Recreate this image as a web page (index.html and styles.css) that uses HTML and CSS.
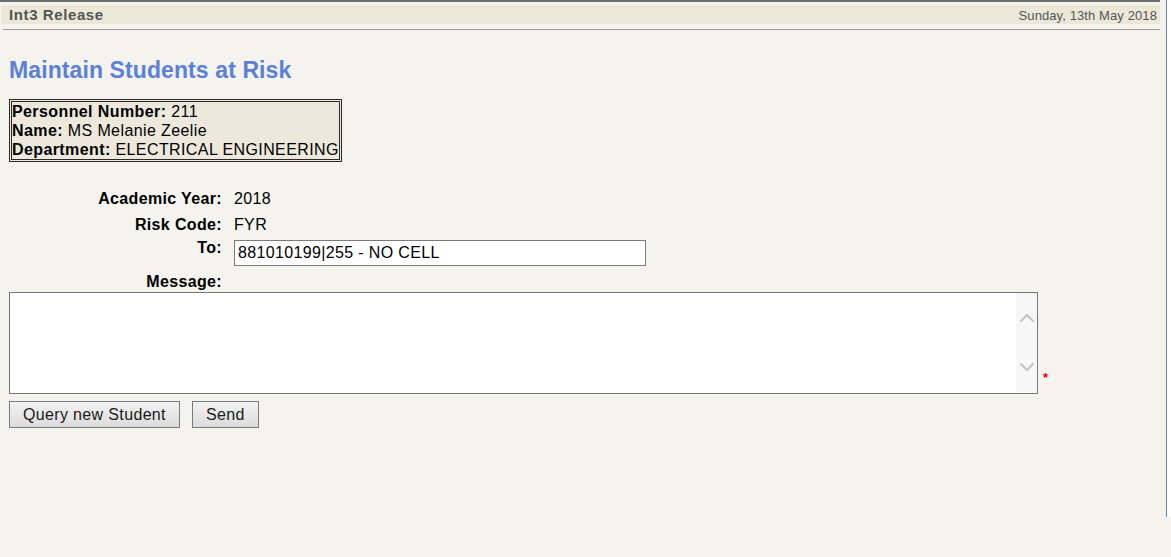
FILE: index.html
```html
<!DOCTYPE html>
<html>
<head>
<meta charset="utf-8">
<link rel="stylesheet" href="styles.css">
</head>
<body>
<div class="shell">
  <div class="frame">
    <div class="topline"></div>
    <div class="headbar">
      <span class="release">Int3 Release</span>
      <span class="date">Sunday, 13th May 2018</span>
    </div>
    <div class="headrule"></div>
    <h1 class="title">Maintain Students at Risk</h1>
    <div class="infobox">
      <div><b>Personnel Number:</b> 211</div>
      <div><b>Name:</b> MS Melanie Zeelie</div>
      <div><b>Department:</b> ELECTRICAL ENGINEERING</div>
    </div>
    <div class="fields">
      <div class="lbl">Academic Year:</div><div class="val">2018</div>
      <div class="lbl">Risk Code:</div><div class="val">FYR</div>
      <div class="lbl lbl-to">To:</div><div class="val val-to"><input class="to-input" type="text" value="881010199|255 - NO CELL"></div>
      <div class="lbl lbl-msg">Message:</div><div class="val"></div>
    </div>
    <div class="msgrow">
      <div class="msgbox">
        <textarea class="msg"></textarea>
        <div class="scroll">
          <svg class="chev" width="16" height="10" viewBox="0 0 16 10"><path d="M1.5 8.5 L8 2 L14.5 8.5" fill="none" stroke="#c4c4c4" stroke-width="2.2"/></svg>
          <svg class="chev" width="16" height="10" viewBox="0 0 16 10"><path d="M1.5 1.5 L8 8 L14.5 1.5" fill="none" stroke="#c4c4c4" stroke-width="2.2"/></svg>
        </div>
      </div>
      <span class="req">*</span>
    </div>
    <div class="buttons">
      <button class="btn" type="button">Query new Student</button>
      <button class="btn" type="button">Send</button>
    </div>
  </div>
  <div class="gutter"></div>
</div>
</body>
</html>
```
FILE: styles.css
```css
html, body {
  margin: 0;
  padding: 0;
  background: #f4f3ee;
  font-family: "Liberation Sans", Arial, sans-serif;
  color: #000;
}
.shell {
  display: flex;
  align-items: flex-start;
}
.frame {
  width: 1166px;
  height: 517px;
  border-right: 1px solid #5d87b0;
  overflow: hidden;
}
.gutter {
  flex: 1;
  height: 517px;
  background: #ffffff;
}
.topline {
  height: 2px;
  width: 1160px;
  background: #6e6e6e;
}
.headbar {
  margin: 3px 6px 0 1px;
  height: 19px;
  line-height: 19px;
  background: #ebe8da;
  display: flex;
  justify-content: space-between;
  align-items: baseline;
  padding: 0 3px 0 8px;
  color: #555;
}
.release {
  font-weight: bold;
  font-size: 15px;
  letter-spacing: 0.6px;
}
.date {
  font-size: 13px;
  letter-spacing: 0.1px;
}
.headrule {
  margin: 5px 6px 0 3px;
  height: 1px;
  background: #9a9a9a;
}
.title {
  margin: 27px 0 0 9px;
  font-size: 23px;
  line-height: 26px;
  font-weight: bold;
  color: #5a80d8;
  letter-spacing: 0.1px;
}
.infobox {
  display: inline-block;
  margin: 16px 0 0 9px;
  border: 3px double #2a2a2a;
  background: #ece9dc;
  font-size: 16px;
  line-height: 19px;
  letter-spacing: 0.4px;
}
.fields {
  margin: 23px 0 0 9px;
  display: grid;
  grid-template-columns: 213px 1fr;
  column-gap: 12px;
  font-size: 16px;
  line-height: 18px;
  letter-spacing: 0.35px;
}
.lbl {
  text-align: right;
  font-weight: bold;
  padding: 5px 0 3px;
}
.val {
  padding: 5px 0 3px;
}
.lbl-to {
  padding: 2px 0 0;
}
.val-to {
  padding: 3px 0;
}
.lbl-msg {
  padding: 4px 0 0;
}
.to-input {
  box-sizing: border-box;
  width: 412px;
  height: 26px;
  margin: 0;
  border: 1px solid #7a7a7a;
  background: #fff;
  font-family: "Liberation Sans", Arial, sans-serif;
  font-size: 16px;
  letter-spacing: 0.35px;
  padding: 0 3px;
  color: #000;
  display: block;
}
.msgrow {
  margin: 1px 0 0 9px;
  display: flex;
  align-items: flex-end;
}
.msgbox {
  box-sizing: border-box;
  width: 1029px;
  height: 102px;
  border: 1px solid #777;
  background: #fff;
  display: flex;
}
.msg {
  flex: 1;
  border: none;
  margin: 0;
  padding: 2px;
  resize: none;
  outline: none;
  background: #fff;
  font-family: "Liberation Sans", Arial, sans-serif;
  font-size: 16px;
}
.scroll {
  width: 21px;
  background: #f7f7f7;
  border-bottom: 1px solid #fff;
  display: flex;
  flex-direction: column;
  align-items: center;
  justify-content: space-between;
  padding: 20px 0 20px;
  box-sizing: border-box;
}
.chev {
  display: block;
}
.req {
  color: #e00000;
  font-size: 13px;
  font-weight: bold;
  line-height: 13px;
  margin: 0 0 10px 5px;
}
.buttons {
  margin: 7px 0 0 9px;
  display: flex;
  gap: 12px;
}
.btn {
  height: 27px;
  margin: 0;
  padding: 0 13px;
  border: 1px solid #7a7a7a;
  border-radius: 0;
  background: linear-gradient(#f2f2f2, #dcdcdc);
  font-family: "Liberation Sans", Arial, sans-serif;
  font-size: 16px;
  letter-spacing: 0.35px;
  color: #1a1a1a;
}
```
